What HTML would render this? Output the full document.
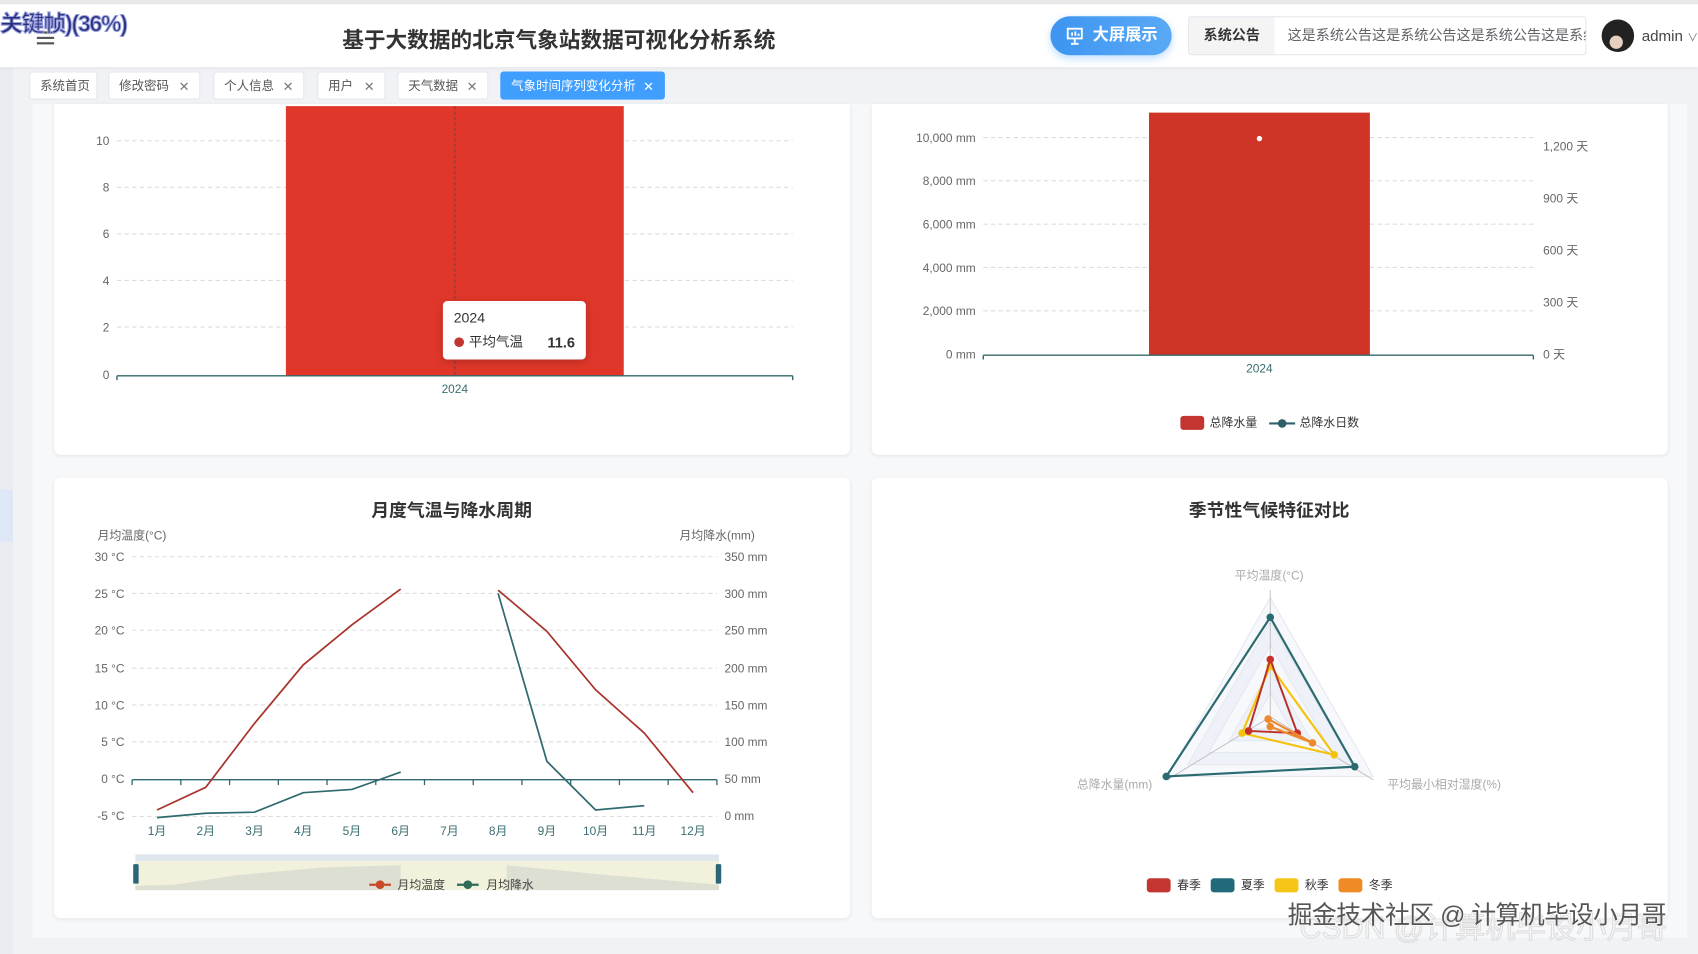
<!DOCTYPE html>
<html><head><meta charset="utf-8">
<style>
html,body{margin:0;padding:0;width:1698px;height:954px;overflow:hidden;background:#f0f2f5;}
#w{position:absolute;left:0;top:0;width:1568px;height:881px;transform:scale(1.08291);transform-origin:0 0;font-family:"Liberation Sans","Noto Sans CJK SC",sans-serif;background:#f0f2f5;}
.a{position:absolute;}
.tab{position:absolute;top:66px;height:26px;line-height:26px;font-size:11.5px;color:#555;background:#fff;border:1px solid #e4e7ed;border-radius:3px;box-sizing:border-box;padding-left:9px;}
.tab span{position:absolute;right:9px;color:#777;font-size:12px;}
.card{position:absolute;background:#fff;border-radius:6px;box-shadow:0 1px 4px rgba(0,0,0,.08);}
</style></head><body>
<div id="w">
<div class="a" style="left:0;top:0;width:12px;height:881px;background:#e9ecf0"></div>
<div class="a" style="left:0;top:452px;width:12px;height:48px;background:#dde7f5"></div>
<div class="a" style="left:0;top:0;width:1568px;height:62px;background:#fff;border-top:4px solid #e8e8e8;box-sizing:border-box;box-shadow:0 1px 4px rgba(0,0,0,.06)"></div>
<div class="a" style="left:34px;top:29px;width:16px;height:2px;background:#555;box-shadow:0 5px 0 #555,0 10px 0 #555"></div>
<div class="a" style="left:0;top:6px;font-size:21px;font-weight:bold;color:#2a2f7a;-webkit-text-stroke:1px #9aa3e0;letter-spacing:-1px">关键帧)(36%)</div>
<div class="a" style="left:316px;top:21px;font-size:20px;font-weight:bold;color:#333">基于大数据的北京气象站数据可视化分析系统</div>
<div class="a" style="left:970px;top:15px;width:112px;height:36px;border-radius:18px;background:linear-gradient(90deg,#3d95f0,#5aa9f7);color:#fff;font-size:15px;font-weight:bold;line-height:36px;box-shadow:0 3px 8px rgba(64,158,255,.35)"><svg class="a" style="left:14px;top:10px" width="17" height="17" viewBox="0 0 17 17" fill="none" stroke="#fff" stroke-width="1.7"><rect x="2" y="1.5" width="13" height="9"/><path d="M8.5 10.5v4M5 15.5h7M6 5v3M9 4v4M12 6v2"/></svg><span style="position:absolute;left:39px">大屏展示</span></div>
<div class="a" style="left:1097px;top:15px;width:368px;height:36px;border:1px solid #e4e7ed;border-radius:3px;box-sizing:border-box;background:#fff;overflow:hidden">
<div class="a" style="left:0;top:0;width:79px;height:34px;background:#f4f4f5;font-size:13px;font-weight:bold;color:#333;line-height:34px;text-align:center">系统公告</div>
<div class="a" style="left:91px;top:0;line-height:34px;font-size:13px;color:#606266;white-space:nowrap">这是系统公告这是系统公告这是系统公告这是系统公告</div></div>
<div class="a" style="left:1479px;top:18px;width:30px;height:30px;border-radius:50%;background:radial-gradient(circle at 45% 70%,#e8d0c0 0 22%,#222 24%)"></div>
<div class="a" style="left:1516px;top:25px;font-size:14px;color:#444;white-space:nowrap">admin <span style="font-size:10px;color:#777">∨</span></div>

<div class="tab" style="left:27px;width:63px">系统首页</div>
<div class="tab" style="left:100px;width:85px">修改密码<span>✕</span></div>
<div class="tab" style="left:197px;width:84px">个人信息<span>✕</span></div>
<div class="tab" style="left:293px;width:63px">用户<span>✕</span></div>
<div class="tab" style="left:367px;width:84px">天气数据<span>✕</span></div>
<div class="tab" style="left:462px;width:152px;background:#409eff;color:#fff;border-color:#409eff">气象时间序列变化分析<span style="color:#fff">✕</span></div>

<div class="a" style="left:30px;top:96px;width:1528px;height:770px;background:#f7f8fa"></div>
<div class="card" style="left:50px;top:96px;width:735px;height:324px;border-radius:0 0 6px 6px"></div>
<div class="card" style="left:805px;top:96px;width:735px;height:324px;border-radius:0 0 6px 6px"></div>
<div class="card" style="left:50px;top:441px;width:735px;height:407px"></div>
<div class="card" style="left:805px;top:441px;width:735px;height:407px"></div>

<svg class="a" style="left:0;top:0" width="1568" height="881" font-family="Liberation Sans,Noto Sans CJK SC,sans-serif">
<g stroke="#ddd" stroke-dasharray="4,3"><path d="M108 130H732M108 173H732M108 216H732M108 259H732M108 302H732"/></g>
<g font-size="11" fill="#666" text-anchor="end"><text x="101" y="134">10</text><text x="101" y="177">8</text><text x="101" y="220">6</text><text x="101" y="263">4</text><text x="101" y="306">2</text><text x="101" y="350">0</text></g>
<rect x="264" y="98" width="312" height="249" fill="#e0372a"/>
<path d="M420 98V347" stroke="#8a3a30" stroke-dasharray="3,2"/>
<path d="M108 347H732M108 347v4M732 347v4" stroke="#35696b" stroke-width="1.3" fill="none"/>
<text x="420" y="363" font-size="11" fill="#3a6e70" text-anchor="middle">2024</text>
<rect x="409" y="278" width="132" height="54" rx="4" fill="#fff" style="filter:drop-shadow(0 2px 4px rgba(0,0,0,.2))"/>
<text x="419" y="298" font-size="13" fill="#333">2024</text>
<circle cx="424" cy="316" r="4.5" fill="#c23531"/>
<text x="433" y="320" font-size="12.5" fill="#333">平均气温</text>
<text x="531" y="321" font-size="13.5" font-weight="bold" fill="#333" text-anchor="end">11.6</text>

<g stroke="#ddd" stroke-dasharray="4,3"><path d="M908 127H1416M908 167H1416M908 207H1416M908 247H1416M908 287H1416"/></g>
<g font-size="11" fill="#666" text-anchor="end"><text x="901" y="131">10,000 mm</text><text x="901" y="171">8,000 mm</text><text x="901" y="211">6,000 mm</text><text x="901" y="251">4,000 mm</text><text x="901" y="291">2,000 mm</text><text x="901" y="331">0 mm</text></g>
<g font-size="11" fill="#666"><text x="1425" y="139">1,200 天</text><text x="1425" y="187">900 天</text><text x="1425" y="235">600 天</text><text x="1425" y="283">300 天</text><text x="1425" y="331">0 天</text></g>
<rect x="1061" y="104" width="204" height="224" fill="#d03427"/>
<circle cx="1163" cy="128" r="2.5" fill="#fff"/>
<path d="M908 328H1416M908 328v4M1416 328v4" stroke="#35696b" stroke-width="1.3" fill="none"/>
<text x="1163" y="344" font-size="11" fill="#3a6e70" text-anchor="middle">2024</text>
<rect x="1090" y="384" width="22" height="13" rx="3" fill="#c23531"/>
<text x="1117" y="394" font-size="11" fill="#333">总降水量</text>
<path d="M1172 391H1196" stroke="#2f5f6a" stroke-width="2"/><circle cx="1184" cy="391" r="4" fill="#2f5f6a"/>
<text x="1200" y="394" font-size="11" fill="#333">总降水日数</text>

<text x="417" y="477" font-size="16.5" font-weight="bold" fill="#333" text-anchor="middle">月度气温与降水周期</text>
<text x="90" y="498" font-size="11" fill="#666">月均温度(°C)</text>
<text x="697" y="498" font-size="11" fill="#666" text-anchor="end">月均降水(mm)</text>
<g stroke="#ddd" stroke-dasharray="4,3"><path d="M122 514H662M122 548H662M122 582H662M122 617H662M122 651H662M122 685H662M122 754H662"/></g>
<g font-size="11" fill="#666" text-anchor="end"><text x="115" y="518">30 °C</text><text x="115" y="552">25 °C</text><text x="115" y="586">20 °C</text><text x="115" y="621">15 °C</text><text x="115" y="655">10 °C</text><text x="115" y="689">5 °C</text><text x="115" y="723">0 °C</text><text x="115" y="757">-5 °C</text></g>
<g font-size="11" fill="#666"><text x="669" y="518">350 mm</text><text x="669" y="552">300 mm</text><text x="669" y="586">250 mm</text><text x="669" y="621">200 mm</text><text x="669" y="655">150 mm</text><text x="669" y="689">100 mm</text><text x="669" y="723">50 mm</text><text x="669" y="757">0 mm</text></g>
<path d="M122 720H662M122 720v5M167 720v5M212 720v5M257 720v5M302 720v5M347 720v5M392 720v5M437 720v5M482 720v5M527 720v5M572 720v5M617 720v5M662 720v5" stroke="#2f6870" stroke-width="1.2" fill="none"/>
<g font-size="11" fill="#3a6e70" text-anchor="middle"><text x="145" y="771">1月</text><text x="190" y="771">2月</text><text x="235" y="771">3月</text><text x="280" y="771">4月</text><text x="325" y="771">5月</text><text x="370" y="771">6月</text><text x="415" y="771">7月</text><text x="460" y="771">8月</text><text x="505" y="771">9月</text><text x="550" y="771">10月</text><text x="595" y="771">11月</text><text x="640" y="771">12月</text></g>
<g fill="none" stroke-width="1.6"><path d="M145 748L190 727L235 668L280 614L325 577L370 544M460 545L505 583L550 637L595 677L640 732" stroke="#a8342c"/>
<path d="M145 755L190 751L235 750L280 732L325 729L370 713M460 548L505 703L550 748L595 744" stroke="#2f6a70"/></g>
<rect x="125" y="789" width="539" height="33" fill="#f1f1dc"/>
<rect x="125" y="789" width="539" height="6" fill="#dfe6ee"/>
<path d="M125 818L160 817L220 808L300 801L370 799V822H125ZM468 799L560 808L664 817V822H468Z" fill="#dcdfd2"/>
<rect x="123" y="798" width="5" height="18" rx="1" fill="#2b6576"/><rect x="661" y="798" width="5" height="18" rx="1" fill="#2b6576"/>
<path d="M341 817H361" stroke="#c94a2a" stroke-width="2"/><circle cx="351" cy="817" r="4" fill="#c94a2a"/><text x="367" y="821" font-size="11" fill="#444">月均温度</text>
<path d="M422 817H442" stroke="#2f6a5a" stroke-width="2"/><circle cx="432" cy="817" r="4" fill="#2f6a5a"/><text x="449" y="821" font-size="11" fill="#444">月均降水</text>

<text x="1172" y="477" font-size="16.5" font-weight="bold" fill="#333" text-anchor="middle">季节性气候特征对比</text>
<g fill="none" stroke="#e4e8ef"><path d="M1173 552L1268 717L1078 717Z" fill="#f6f8fb"/><path d="M1173 574L1249 706L1097 706Z" fill="#eef2f8"/><path d="M1173 596L1230 695L1116 695Z" fill="#f6f8fb"/><path d="M1173 618L1211 684L1135 684Z" fill="#eef2f8"/><path d="M1173 640L1192 673L1154 673Z" fill="#f6f8fb"/></g>
<path d="M1173 662V545M1173 662L1268 720M1173 662L1078 720" stroke="#bbb" stroke-width=".8"/>
<g font-size="11" fill="#aaa"><text x="1172" y="535" text-anchor="middle">平均温度(°C)</text><text x="1064" y="728" text-anchor="end">总降水量(mm)</text><text x="1281" y="728">平均最小相对湿度(%)</text></g>
<path d="M1173 570L1251 708L1077 717Z" fill="none" stroke="#2a6a70" stroke-width="2"/>
<circle cx="1173" cy="570" r="3.5" fill="#2a6a70"/><circle cx="1251" cy="708" r="3.5" fill="#2a6a70"/><circle cx="1077" cy="717" r="3.5" fill="#2a6a70"/>
<path d="M1173 615L1232 697L1147 677Z" fill="none" stroke="#f4c20d" stroke-width="2"/>
<circle cx="1173" cy="615" r="3.5" fill="#f4c20d"/><circle cx="1232" cy="697" r="3.5" fill="#f4c20d"/><circle cx="1147" cy="677" r="3.5" fill="#f4c20d"/>
<path d="M1173 609L1198 677L1153 675Z" fill="none" stroke="#b8302a" stroke-width="1.8"/>
<circle cx="1173" cy="609" r="3.5" fill="#c73028"/><circle cx="1198" cy="677" r="3.5" fill="#c73028"/><circle cx="1153" cy="675" r="3.5" fill="#c73028"/>
<path d="M1171 664L1212 686L1173 671Z" fill="none" stroke="#ec8a2d" stroke-width="2"/>
<circle cx="1171" cy="664" r="3.5" fill="#ec8a2d"/><circle cx="1212" cy="686" r="3.5" fill="#ec8a2d"/><circle cx="1173" cy="671" r="3.5" fill="#ec8a2d"/>
<g font-size="11" fill="#333"><rect x="1059" y="811" width="22" height="13" rx="3" fill="#c23531"/><text x="1087" y="821">春季</text>
<rect x="1118" y="811" width="22" height="13" rx="3" fill="#226a7a"/><text x="1146" y="821">夏季</text>
<rect x="1177" y="811" width="22" height="13" rx="3" fill="#f5c518"/><text x="1205" y="821">秋季</text>
<rect x="1236" y="811" width="22" height="13" rx="3" fill="#ef8a25"/><text x="1264" y="821">冬季</text></g>
<text x="1200" y="866" font-size="28" fill="none" stroke="#ddd" stroke-width="1">CSDN @计算机毕设小月哥</text>
<text x="1189" y="853" font-size="23" fill="#555" stroke="#fff" stroke-width="0.6" paint-order="stroke" textLength="350">掘金技术社区 @ 计算机毕设小月哥</text>
</svg>
</div>
</body></html>
